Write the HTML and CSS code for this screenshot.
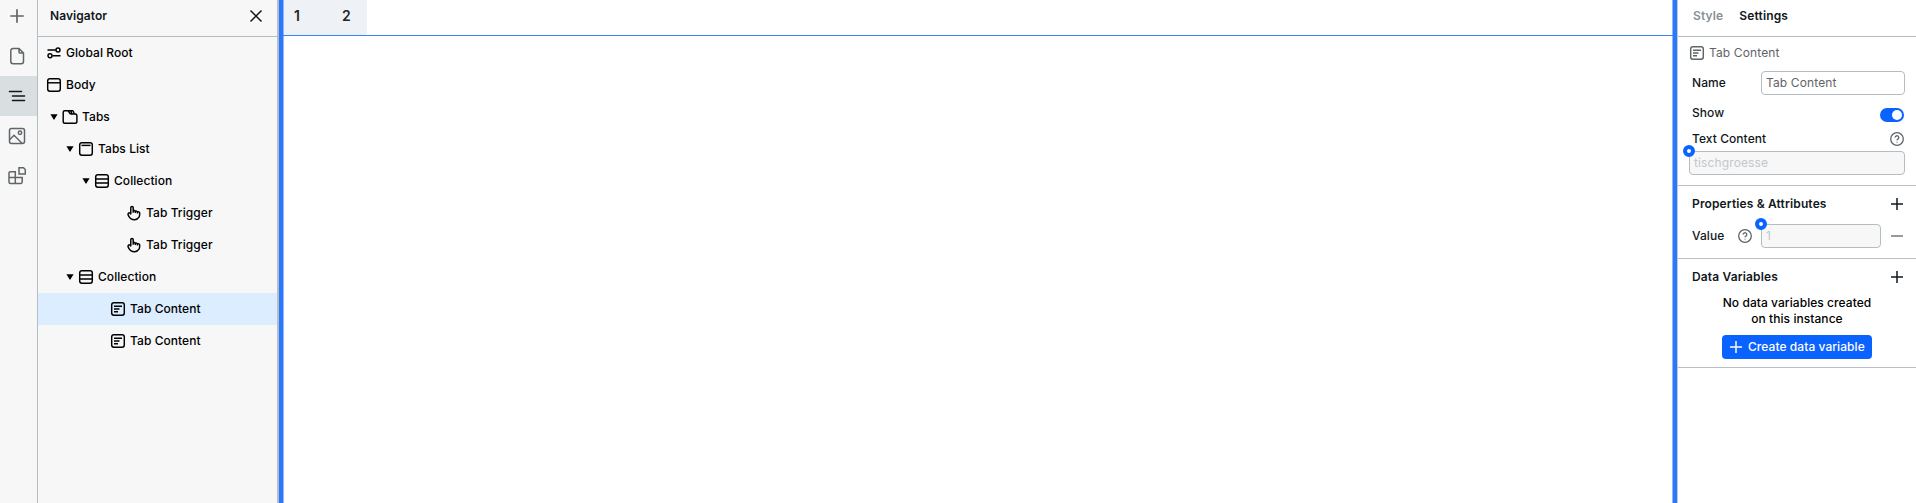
FILE: index.html
```html
<!DOCTYPE html>
<html lang="en">
<head>
<meta charset="utf-8">
<title>Navigator</title>
<link rel="stylesheet" href="styles.css">
</head>
<body>
<svg class="defs" aria-hidden="true">
  <symbol id="plus" viewBox="0 0 16 16"><path d="M8 2v12M2 8h12"/></symbol>
  <symbol id="box" viewBox="0 0 16 16"><rect x="1.7" y="1.7" width="12.6" height="12.6" rx="2.2"/><path d="M1.7 5.8h12.6"/></symbol>
  <symbol id="list" viewBox="0 0 16 16"><rect x="1.7" y="1.7" width="12.6" height="12.6" rx="2.2"/><path d="M3.5 4.4h9"/></symbol>
  <symbol id="collection" viewBox="0 0 16 16"><rect x="1.7" y="1.7" width="12.6" height="12.6" rx="2.2"/><path d="M1.7 6h12.6M1.7 10h12.6"/></symbol>
  <symbol id="content" viewBox="0 0 16 16"><rect x="1.7" y="1.7" width="12.6" height="12.6" rx="2.2"/><path d="M4 5.3h8M4 8h5.500M4 10.700h4"/></symbol>
  <symbol id="tabs" viewBox="0 0 16 16"><path d="M1.200 3.200a1.500 1.500 0 0 1 1.500-1.500h3c1.300 0 1.500 3.300 3.300 3.300h4.200a1.700 1.700 0 0 1 1.700 1.700v5.800a1.800 1.800 0 0 1-1.800 1.800H3a1.800 1.800 0 0 1-1.800-1.800zM5.500 1.700h2.700c1 0 1 1.500 1.700 3M8 1.700h2.600c1 0 1 1.500 1.600 3"/></symbol>
  <symbol id="root" viewBox="0 0 16 16"><path d="M1.500 5h8.300M6.500 10.800h8"/><circle cx="12" cy="5" r="2"/><circle cx="4" cy="10.800" r="2"/></symbol>
  <symbol id="trigger" viewBox="0 0 16 16"><path d="M4.800 9.300V2.600a1.200 1.200 0 0 1 2.400 0v3.200c.8-.7 1.900-.4 2.100.5.8-.6 1.800-.2 2.100.6.9-.5 2.300-.1 2.300 1.200 0 1.600.1 2.800-.7 4.100a5.200 5.200 0 0 1-4.600 2.500c-3 0-4.600-1.500-5.600-3.300C2 9.900 1.600 8.700 2.500 8c.9-.6 1.700.2 2.300 1.300zM7.200 5.800v1.900M9.300 6.300v1.800M11.400 6.900v1.600"/></symbol>
  <symbol id="help" viewBox="0 0 16 16"><circle cx="8" cy="8" r="6.300"/><path d="M6.200 6.500a1.800 1.800 0 1 1 2.700 1.600c-.6.3-.9.6-.9 1.100M8 10.700v.9"/></symbol>
  <symbol id="caret" viewBox="0 0 8 8"><path d="M.4 1.200h7.200L4 7z"/></symbol>
</svg>
<div class="app">
  <nav class="rail">
    <div class="rail-item"><svg class="icon"><use href="#plus"/></svg></div>
    <div class="rail-item"><svg class="icon page" viewBox="0 0 18 18"><path d="M5 1.500h6L15.500 6v8.500a2.200 2.200 0 0 1-2.200 2.200H5a2.200 2.200 0 0 1-2.200-2.200V3.700A2.200 2.200 0 0 1 5 1.500zM11 1.700v3a1.300 1.300 0 0 0 1.300 1.300h3"/></svg></div>
    <div class="rail-item active"><svg class="icon tree" viewBox="0 0 18 18"><path d="M1.500 4.500h12M4.500 9h12M4.500 13.500h12"/></svg></div>
    <div class="rail-item"><svg class="icon" viewBox="0 0 18 18"><rect x="1.500" y="1.500" width="15" height="15" rx="2"/><circle cx="12" cy="5.800" r="1.700"/><path d="M1.800 12.500 6 8.300l8 8"/></svg></div>
    <div class="rail-item"><svg class="icon blocks" viewBox="0 0 18 18"><path d="M1 6a1.300 1.300 0 0 1 1.300-1.300h5v11.800H2.500A1.500 1.500 0 0 1 1 15zM1 10.500h13.200V15a1.500 1.500 0 0 1-1.500 1.500h-6M11 .8h4.500L17.300 2.500V7h-6.300z"/></svg></div>
  </nav>
  <aside class="navigator">
    <header class="nav-head"><h2>Navigator</h2><svg class="icon close" viewBox="0 0 16 16"><path d="m2.500 2.500 11 11M13.500 2.500l-11 11"/></svg></header>
    <div class="row"><svg class="icon"><use href="#root"/></svg><span>Global Root</span></div>
    <div class="row"><svg class="icon"><use href="#box"/></svg><span>Body</span></div>
    <div class="row l1"><svg class="caret"><use href="#caret"/></svg><svg class="icon"><use href="#tabs"/></svg><span>Tabs</span></div>
    <div class="row l2"><svg class="caret"><use href="#caret"/></svg><svg class="icon"><use href="#list"/></svg><span>Tabs List</span></div>
    <div class="row l3"><svg class="caret"><use href="#caret"/></svg><svg class="icon"><use href="#collection"/></svg><span>Collection</span></div>
    <div class="row l5"><svg class="icon"><use href="#trigger"/></svg><span>Tab Trigger</span></div>
    <div class="row l5"><svg class="icon"><use href="#trigger"/></svg><span>Tab Trigger</span></div>
    <div class="row l2"><svg class="caret"><use href="#caret"/></svg><svg class="icon"><use href="#collection"/></svg><span>Collection</span></div>
    <div class="row l4 selected"><svg class="icon"><use href="#content"/></svg><span>Tab Content</span></div>
    <div class="row l4"><svg class="icon"><use href="#content"/></svg><span>Tab Content</span></div>
  </aside>
  <main class="canvas">
    <div class="tab-strip"><div class="tab-list"><span>1</span><span>2</span></div></div>
  </main>
  <aside class="inspector">
    <header class="tabs"><span class="muted">Style</span><span>Settings</span></header>
    <section class="general">
      <div class="instance"><svg class="icon"><use href="#content"/></svg><span>Tab Content</span></div>
      <div class="field name"><label>Name</label><div class="input">Tab Content</div></div>
      <div class="field show"><label>Show</label><div class="switch"></div></div>
      <div class="field text"><label>Text Content</label><svg class="icon"><use href="#help"/></svg></div>
      <div class="input bound wide">tischgroesse<i class="dot"></i></div>
    </section>
    <section class="props">
      <div class="head"><h3>Properties &amp; Attributes</h3><svg class="icon"><use href="#plus"/></svg></div>
      <div class="field value"><label>Value</label><svg class="icon"><use href="#help"/></svg><div class="input bound">1<i class="dot"></i></div><svg class="icon minus" viewBox="0 0 16 16"><path d="M2 8h12"/></svg></div>
    </section>
    <section class="data">
      <div class="head"><h3>Data Variables</h3><svg class="icon"><use href="#plus"/></svg></div>
      <p>No data variables created<br>on this instance</p>
      <button><svg class="icon"><use href="#plus"/></svg>Create data variable</button>
    </section>
  </aside>
</div>
</body>
</html>
```
FILE: styles.css
```css
* { box-sizing: border-box; }
body { margin: 0; background: #fff; color: #11181c; font: 500 12px/16px Inter, sans-serif; letter-spacing: .06px; overflow: hidden; }
h2, h3, p { margin: 0; font-size: 12px; line-height: 16px; }
h2, h3 { font-weight: 600; }
h3 { letter-spacing: .14px; }
.defs { position: absolute; width: 0; height: 0; }
.icon { width: 16px; height: 16px; flex: none; fill: none; stroke: currentColor; stroke-width: 1.45; }
.app { display: flex; width: 1916px; height: 503px; }

.rail { width: 38px; flex: none; background: #f7f7f7; border-right: 1px solid #b4bcc4; color: #606668; overflow: hidden; }
.rail-item { height: 40px; display: flex; align-items: center; justify-content: center; padding-right: 3px; }
.rail-item:first-child { margin-top: -4px; }
.rail-item .icon { width: 18px; height: 18px; stroke-width: 1.5; }
.rail-item.active { background: #d9dfe1; color: #11181c; }
.rail-item .tree { stroke-width: 1.6; stroke-linecap: round; }

.navigator { width: 241px; flex: none; background: #f7f7f7; border-right: 2px solid #b9bdbf; color: #000; }
.nav-head { height: 37px; padding: 0 13px 5px 12px; display: flex; align-items: center; justify-content: space-between; border-bottom: 1px solid #b4bcc4; color: #11181c; }
.close { stroke-width: 1.5; }
.row { height: 32px; display: flex; align-items: center; padding-left: 8px; }
.row .icon { margin-right: 4px; }
.row.l1 { padding-left: 12px; }
.row.l2 { padding-left: 28px; }
.row.l3 { padding-left: 44px; }
.row.l4 { padding-left: 72px; }
.row.l5 { padding-left: 88px; }
.row.selected { background: #dcedff; }
.caret { width: 8px; height: 8px; margin-right: 4px; fill: #000; }

.canvas { flex: 1; background: #fff; border: solid #2a78ff; border-width: 0 4px; box-shadow: inset 1px 0 #8fb8fb, inset -1px 0 #8fb8fb; }
.tab-strip { height: 36px; padding-left: 1px; border-bottom: 1px solid #3b82f6; }
.tab-list { width: 83px; height: 35px; display: flex; gap: 42px; padding: 8px 0 0 10px; background: #eef1f6; border-radius: 0 0 3px 0; font: 600 14px/16px Inter, sans-serif; color: #242424; }

.inspector { width: 239px; flex: none; border-left: 1px solid #c1c8cd; background: #fff; }
.tabs { height: 37px; padding: 0 0 5px 15px; display: flex; align-items: center; gap: 16px; border-bottom: 1px solid #b4bcc4; font-weight: 600; letter-spacing: .14px; }
.tabs .muted { color: #889096; }
section { border-bottom: 1px solid #b9c0c4; padding-right: 11px; }
.general { height: 149px; }
.instance { height: 32px; display: flex; align-items: center; padding-left: 11px; gap: 4px; color: #5f6467; font-weight: 400; letter-spacing: .12px; }
.field { display: flex; align-items: center; padding-left: 14px; }
.input { height: 24px; border: 1px solid #b4bcc4; border-radius: 4px; padding: 0 4px; line-height: 22px; font-weight: 400; letter-spacing: .12px; color: #5f6467; position: relative; }
.name { height: 28px; }
.name .input { margin: 0 0 0 auto; width: 144px; }
.show { height: 34px; justify-content: space-between; }
.show label { margin-top: -2px; }
.switch { width: 24px; height: 14px; border-radius: 7px; background: #0a62ff; margin: 1px 1px 0 0; padding: 2px; }
.switch::after { content: ""; display: block; width: 10px; height: 10px; margin-left: auto; border-radius: 50%; background: #fff; }
.text { height: 20px; justify-content: space-between; margin-top: -2px; }
.text .icon, .value .icon { color: #5f6467; stroke-width: 1.3; }
.bound { background: #f7f7f7; color: #c1c8cd; }
.wide { margin-left: 11px; margin-top: 2px; }
.dot { position: absolute; left: -7px; top: -7px; width: 12px; height: 12px; border-radius: 50%; border: 4px solid #0a62ff; background: #fff; }
.props { height: 73px; }
.head { height: 36px; display: flex; align-items: center; justify-content: space-between; padding-left: 14px; }
.head .icon { stroke-width: 1.5; }
.value { height: 26px; margin-top: 1px; }
.value label { width: 45px; }
.value .input { width: 120px; margin: 0 8px; }
.data { height: 109px; }
.data p { padding-left: 11px; text-align: center; color: #000; font-weight: 500; }
button { display: flex; align-items: center; gap: 4px; height: 24px; width: 150px; margin: 8px 0 0 44px; padding: 0 6px; border: 0; border-radius: 4px; background: #0a62ff; color: #fff; font: inherit; letter-spacing: .06px; white-space: nowrap; }
```
